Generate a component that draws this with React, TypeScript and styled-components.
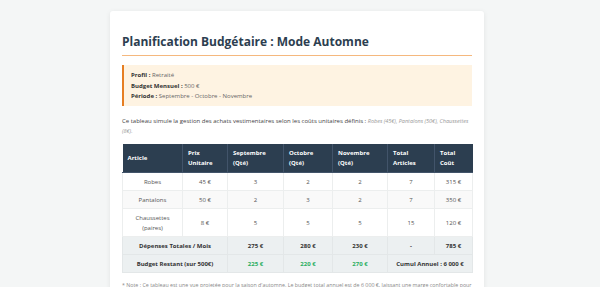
import React from 'react';
import styled, { createGlobalStyle } from 'styled-components';

const Global = createGlobalStyle`
  html, body {
    margin: 0;
    padding: 0;
    background: #f4f6f6;
  }
  body {
    font-family: "Open Sans", "Noto Sans", sans-serif;
    color: #333;
  }
`;

const Page = styled.div`
  padding: 11px 6px 20px 0;
`;

const Card = styled.div`
  width: 350px;
  margin: 0 auto;
  background: #fff;
  border-radius: 3px;
  box-shadow: 0 1px 5px rgba(0, 0, 0, 0.08);
  padding: 21px 12px 14px;
`;

const Title = styled.h1`
  margin: 0;
  font-size: 12px;
  line-height: 20px;
  font-weight: 700;
  color: #2c3e50;
  padding-bottom: 3px;
  border-bottom: 1px solid #f5b87e;
`;

const InfoBox = styled.div`
  margin-top: 9px;
  background: #fef3e2;
  border-left: 2px solid #e67e22;
  padding: 5px 7px 4px;
  font-size: 6px;
  line-height: 10.5px;
  color: #666;
`;

const Label = styled.strong`
  color: #333;
  font-weight: 700;
`;

const Intro = styled.p`
  margin: 10px 0 0;
  font-size: 6px;
  line-height: 10px;
  color: #444;
`;

const Muted = styled.em`
  color: #999;
  font-size: 5.5px;
  line-height: 10px;
`;

const Table = styled.table`
  margin-top: 8px;
  width: 350px;
  border-collapse: collapse;
  table-layout: fixed;
  font-size: 6px;
`;

const Th = styled.th`
  background: #2c3e50;
  color: #fff;
  font-weight: 700;
  text-align: left;
  padding: 4px 5px;
  line-height: 10px;
  height: 20px;
  border: 1px solid #42546a;
  border-top: 0;
  &:first-child { border-left: 0; }
  &:last-child { border-right: 0; }
`;

const Td = styled.td<{ $tone?: 'green' }>`
  text-align: center;
  padding: 4px 5px 3px;
  line-height: 10px;
  color: ${(p) => (p.$tone === 'green' ? '#27ae60' : '#555')};
  border: 1px solid #eceeee;
`;

const Row = styled.tr<{ $alt?: boolean }>`
  background: ${(p) => (p.$alt ? '#f9f9f9' : '#fff')};
`;

const TotalRow = styled.tr`
  background: #ecf0f1;
  & td {
    font-weight: 700;
    border-color: #e3e7e8;
  }
  & td:not([data-tone]) {
    color: #333;
  }
`;

const Note = styled.p`
  margin: 8px 0 0;
  font-size: 5.3px;
  line-height: 9px;
  color: #888;
`;

const widths = [60, 45, 56, 49, 55, 47, 38];

const items = [
  { name: 'Robes', price: '45 €', q: [3, 2, 2], total: 7, cost: '315 €' },
  { name: 'Pantalons', price: '50 €', q: [2, 3, 2], total: 7, cost: '350 €' },
  { name: <>Chaussettes<br />(paires)</>, price: '8 €', q: [5, 5, 5], total: 15, cost: '120 €' },
];

const remaining = ['225 €', '220 €', '270 €'];

export default function App() {
  return (
    <>
      <Global />
      <Page>
        <Card>
          <Title>Planification Budgétaire : Mode Automne</Title>
          <InfoBox>
            <div><Label>Profil :</Label> Retraité</div>
            <div><Label>Budget Mensuel :</Label> 500 €</div>
            <div><Label>Période :</Label> Septembre - Octobre - Novembre</div>
          </InfoBox>
          <Intro>
            Ce tableau simule la gestion des achats vestimentaires selon les coûts unitaires définis :{' '}
            <Muted>Robes (45€), Pantalons (50€), Chaussettes (8€).</Muted>
          </Intro>
          <Table>
            <colgroup>
              {widths.map((w, i) => <col key={i} style={{ width: w }} />)}
            </colgroup>
            <thead>
              <tr>
                <Th>Article</Th>
                <Th>Prix<br />Unitaire</Th>
                <Th>Septembre<br />(Qté)</Th>
                <Th>Octobre<br />(Qté)</Th>
                <Th>Novembre<br />(Qté)</Th>
                <Th>Total<br />Articles</Th>
                <Th>Total<br />Coût</Th>
              </tr>
            </thead>
            <tbody>
              {items.map((it, i) => (
                <Row key={i} $alt={i === 1}>
                  <Td>{it.name}</Td>
                  <Td>{it.price}</Td>
                  {it.q.map((n, j) => <Td key={j}>{n}</Td>)}
                  <Td>{it.total}</Td>
                  <Td>{it.cost}</Td>
                </Row>
              ))}
              <TotalRow>
                <Td colSpan={2}>Dépenses Totales / Mois</Td>
                <Td>275 €</Td>
                <Td>280 €</Td>
                <Td>230 €</Td>
                <Td>-</Td>
                <Td>785 €</Td>
              </TotalRow>
              <TotalRow>
                <Td colSpan={2}>Budget Restant (sur 500€)</Td>
                {remaining.map((r) => (
                  <Td key={r} $tone="green" data-tone="green">{r}</Td>
                ))}
                <Td colSpan={2}>Cumul Annuel : 6 000 €</Td>
              </TotalRow>
            </tbody>
          </Table>
          <Note>
            * Note : Ce tableau est une vue projetée pour la saison d'automne. Le budget total annuel est de 6 000 €, laissant une marge confortable pour les autres mois de l'année.
          </Note>
        </Card>
      </Page>
    </>
  );
}
